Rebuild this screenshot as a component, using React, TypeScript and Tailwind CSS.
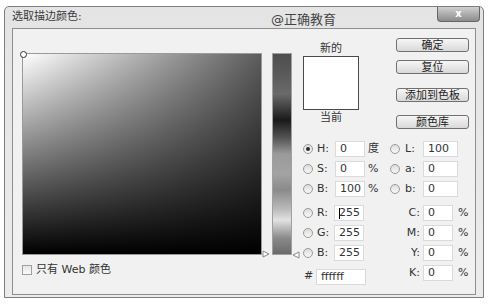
const font = { fontFamily: '"DejaVu Sans", "Noto Sans CJK SC", sans-serif' };

function Radio({ checked = false }: { checked?: boolean }) {
  return (
    <div className="w-[10px] h-[10px] rounded-full border border-[#9a9a9a] bg-gradient-to-b from-[#dcdcdc] to-[#f8f8f8] flex items-center justify-center shrink-0">
      {checked && <div className="w-[4px] h-[4px] rounded-full bg-[#2a2a2a]" />}
    </div>
  );
}

function Field({ value, w = 30, caret = false }: { value: string; w?: number; caret?: boolean }) {
  return (
    <div
      className="h-[16px] bg-white border border-[#dadada] pl-[4px] flex items-center text-[11px] text-[#333] shrink-0"
      style={{ width: w }}
    >
      {caret && <span className="w-px h-[11px] bg-black -mr-px" />}
      {value}
    </div>
  );
}

function Btn({ label, className = "" }: { label: string; className?: string }) {
  return (
    <div
      className={`w-[73px] h-[14px] rounded-[3px] border border-[#707070] bg-gradient-to-b from-[#f6f6f6] to-[#d9d9d9] flex items-center justify-center text-[11px] text-[#222] leading-none ${className}`}
    >
      {label}
    </div>
  );
}

function HsbRow({
  k,
  v,
  unit,
  k2,
  v2,
  checked = false,
}: {
  k: string;
  v: string;
  unit: string;
  k2: string;
  v2: string;
  checked?: boolean;
}) {
  return (
    <div className="h-[20px] flex items-center">
      <Radio checked={checked} />
      <span className="ml-[4px] w-[18px] text-[11px]">{k}</span>
      <Field value={v} />
      <span className="ml-[3px] w-[22px] text-[11px]">{unit}</span>
      <Radio />
      <span className="ml-[5px] w-[18px] text-[11px]">{k2}</span>
      <Field value={v2} w={35} />
    </div>
  );
}

function RgbRow({ k, v, k2, caret = false }: { k: string; v: string; k2: string; caret?: boolean }) {
  return (
    <div className="h-[20px] flex items-center">
      <Radio />
      <span className="ml-[4px] w-[17px] text-[11px]">{k}</span>
      <Field value={v} caret={caret} />
      <span className="w-[59px] text-right text-[11px] pr-[3px]">{k2}</span>
      <Field value="0" w={30} />
      <span className="ml-[5px] text-[11px]">%</span>
    </div>
  );
}

export default function App() {
  return (
    <div className="w-[493px] h-[307px] bg-white overflow-hidden text-[#333]" style={font}>
      <div className="ml-[4px] mt-[6px] w-[480px] h-[292px] border border-[#7d7d7d] rounded-t-[5px] bg-gradient-to-b from-[#e4e4e4] to-[#ececec] flex flex-col px-[7px] pb-[2px] relative">
        <div className="h-[21px] flex items-center text-[11px] text-[#3a3a3a]">选取描边颜色:</div>
        <div className="absolute left-[266px] top-[3px] text-[13px] text-[#444]">@正确教育</div>
        <div className="absolute right-[3px] top-0 w-[43px] h-[15px] rounded-b-[4px] border border-t-0 border-[#666] bg-gradient-to-b from-[#d0d0d0] to-[#8c8c8c] flex items-center justify-center text-white text-[10px] font-bold leading-none">
          x
        </div>

        <div className="flex-1 border border-[#8e8e8e] bg-[#f1f1f1] flex items-start">
          <div className="pl-[9px] pt-[24px]">
            <div
              className="relative w-[240px] h-[202px] border border-[#9a9a9a]"
              style={{
                background:
                  "linear-gradient(to bottom, rgba(0,0,0,0), #000), linear-gradient(to right, #fff, #5c5c5c)",
              }}
            >
              <div className="absolute -left-[3px] -top-[3px] w-[7px] h-[7px] rounded-full border border-[#333] bg-white" />
              <svg className="absolute -right-[9px] -bottom-[4px]" width="8" height="8" viewBox="0 0 8 8">
                <path d="M1 1 L7 4 L1 7 Z" fill="#fff" stroke="#888" strokeWidth="1" />
              </svg>
            </div>
            <div className="mt-[7px] flex items-center text-[11px]">
              <div className="w-[10px] h-[10px] border border-[#a0a0a0] bg-gradient-to-b from-[#e6e6e6] to-[#fafafa]" />
              <span className="ml-[4px]">只有 Web 颜色</span>
            </div>
          </div>

          <div className="ml-[10px] mt-[24px] relative">
            <div
              className="w-[20px] h-[202px] border border-[#a0a0a0]"
              style={{
                background:
                  "linear-gradient(to bottom, #4e4e4e 0%, #5a5a5a 10%, #6a6a6a 20%, #1a1a1a 33%, #545454 42%, #9a9a9a 50%, #a3a3a3 60%, #8a8a8a 68%, #bdbdbd 78%, #e2e2e2 83%, #8a8a8a 92%, #6a6a6a 100%)",
              }}
            />
            <svg className="absolute -right-[8px] bottom-[-4px]" width="8" height="8" viewBox="0 0 8 8">
              <path d="M7 1 L1 4 L7 7 Z" fill="#fff" stroke="#888" strokeWidth="1" />
            </svg>
          </div>

          <div className="ml-[11px] pt-[9px] flex flex-col">
            <div className="flex">
              <div className="w-[56px] pt-[5px] flex flex-col items-center text-[11px]">
                <div className="h-[12px] leading-[12px]">新的</div>
                <div className="mt-[1px] w-[56px] h-[54px] border border-[#4a4a4a] bg-white" />
                <div className="mt-[2px] leading-[12px]">当前</div>
              </div>
              <div className="ml-[37px] flex flex-col">
                <Btn label="确定" />
                <Btn label="复位" className="mt-[8px]" />
                <Btn label="添加到色板" className="mt-[14px]" />
                <Btn label="颜色库" className="mt-[13px]" />
              </div>
            </div>

            <div className="mt-[10px] flex flex-col">
              <HsbRow k="H:" v="0" unit="度" k2="L:" v2="100" checked />
              <HsbRow k="S:" v="0" unit="%" k2="a:" v2="0" />
              <HsbRow k="B:" v="100" unit="%" k2="b:" v2="0" />
              <div className="h-[4px]" />
              <RgbRow k="R:" v="255" k2="C:" caret />
              <RgbRow k="G:" v="255" k2="M:" />
              <RgbRow k="B:" v="255" k2="Y:" />
              <div className="h-[20px] flex items-start">
                <span className="ml-[1px] w-[12px] text-[11px] mt-[5px]">#</span>
                <div className="mt-[6px]">
                  <Field value="ffffff" w={50} />
                </div>
                <span className="w-[57px] text-right text-[11px] pr-[3px] mt-[2px]">K:</span>
                <div className="mt-[2px]">
                  <Field value="0" w={30} />
                </div>
                <span className="ml-[5px] text-[11px] mt-[2px]">%</span>
              </div>
            </div>
          </div>
        </div>
      </div>
    </div>
  );
}
